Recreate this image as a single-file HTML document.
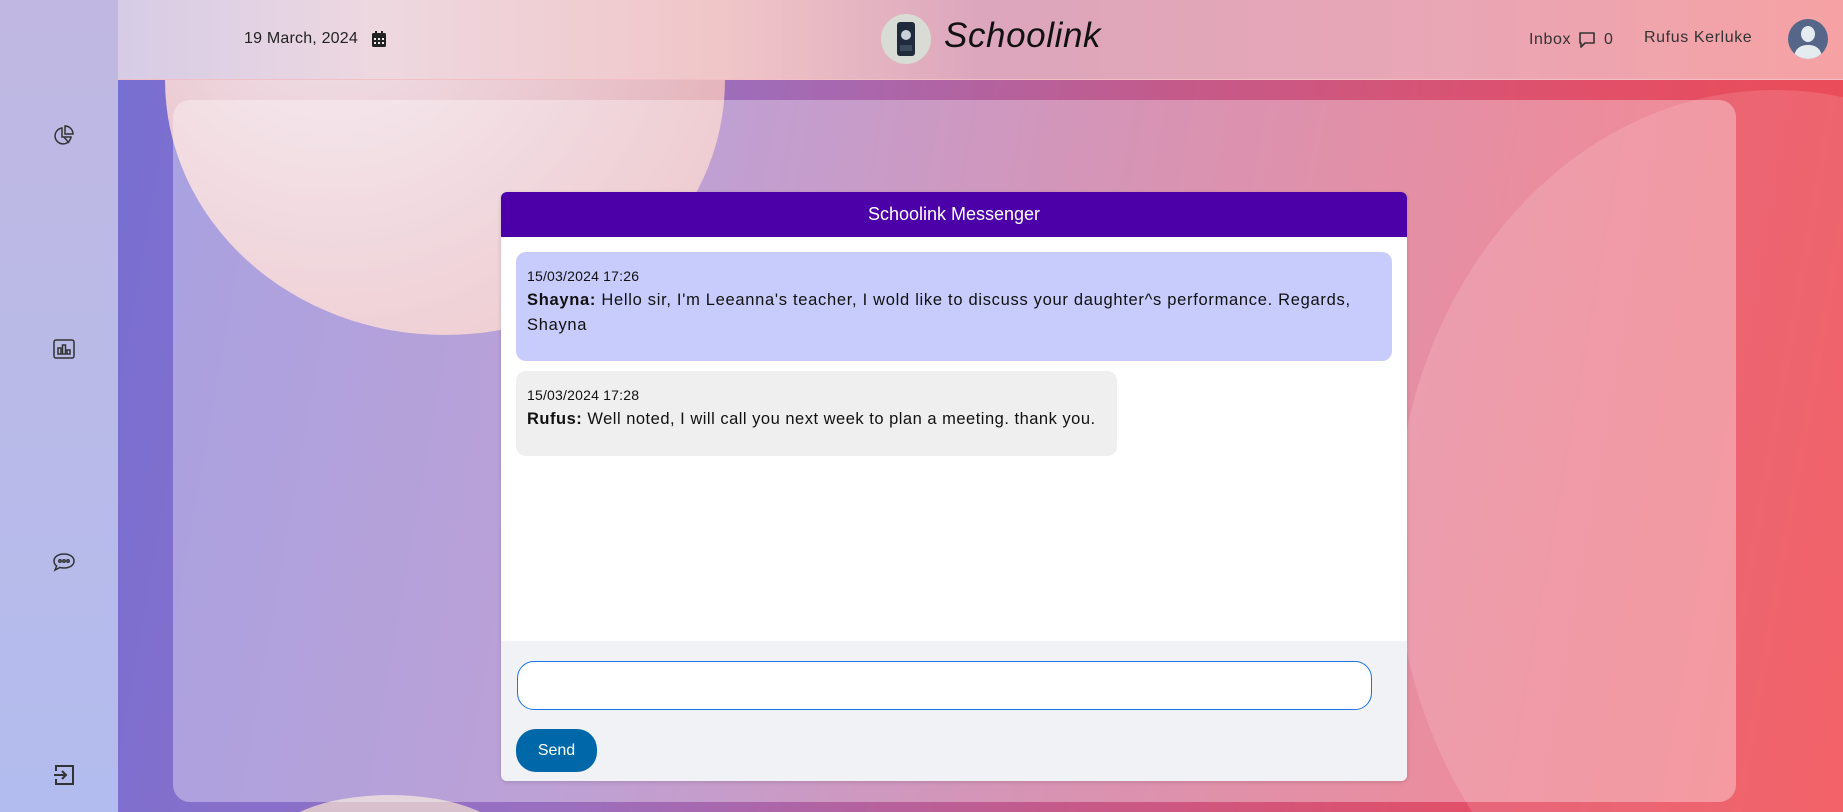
<!DOCTYPE html>
<html style="width:1843px;height:812px;overflow:hidden"><head><meta charset="utf-8"><style>
*{box-sizing:border-box;margin:0;padding:0}
html,body{width:1843px;height:812px;overflow:hidden}
body{position:relative;font-family:"Liberation Sans",sans-serif;}
#w{position:absolute;left:0;top:0;width:1843px;height:812px;overflow:hidden;
background:linear-gradient(100deg,#6f6fd6 0%,#9a6fc0 35%,#c45a8a 60%,#e0506a 80%,#f04a50 100%);}
.blob{position:absolute;border-radius:50%}
.side{position:absolute;left:0;top:0;width:118px;height:812px;background:linear-gradient(180deg,#c0b8e2,#b2bcee);}
.head{position:absolute;left:118px;top:0;width:1725px;height:80px;background:linear-gradient(90deg,#d6cce6 0%,#eed8e0 15%,#f0c6c8 35%,#dca6bc 50%,#e8a6b6 75%,#f6a2a4 100%);border-bottom:1px solid #f2c0c4}
.panel{position:absolute;left:173px;top:100px;width:1563px;height:702px;border-radius:17px;background:rgba(255,255,255,0.35)}
.ico{position:absolute;left:52px;width:24px;height:24px}
.msgr{position:absolute;left:501px;top:192px;width:906px;height:589px;background:#fff;border-radius:6px;overflow:hidden;box-shadow:0 1px 4px rgba(0,0,0,.15)}
.mh{height:45px;background:#4b00a8;color:#fff;font-size:18px;text-align:center;line-height:45px}
.b{position:absolute;left:15px;border-radius:10px;padding:14px 11px;font-size:16.5px;letter-spacing:0.7px;line-height:25px;color:#111}
.b .d{font-size:14px;letter-spacing:0.2px;line-height:20px;margin-bottom:2px}
.foot{position:absolute;left:0;top:449px;width:906px;height:140px;background:#f0f2f5}
.ht{position:absolute;font-size:16px;color:#333;letter-spacing:0.6px}
</style></head><body><div id="w">
<div class="blob" style="left:165px;top:-175px;width:560px;height:510px;background:radial-gradient(circle at 30% 30%,#f2e6ee,#e6b8c0 70%,#e4a8b0);"></div>
<div class="blob" style="left:1395px;top:90px;width:760px;height:900px;background:rgba(255,210,210,0.18)"></div>
<div class="blob" style="left:270px;top:795px;width:240px;height:100px;background:#d8c0cc"></div>
<div class="panel"></div>
<div class="side"></div>
<div class="head"></div>
<div class="ht" style="left:244px;top:30px;color:#222;letter-spacing:0.2px">19 March, 2024</div>
<svg style="position:absolute;left:372px;top:31px" width="14" height="16" viewBox="0 0 14 16"><rect x="0" y="2" width="14" height="14" rx="1.5" fill="#222"/><rect x="3" y="0" width="2" height="4" fill="#222"/><rect x="9" y="0" width="2" height="4" fill="#222"/><g fill="#eee"><rect x="2" y="7" width="2" height="2"/><rect x="6" y="7" width="2" height="2"/><rect x="10" y="7" width="2" height="2"/><rect x="2" y="11" width="2" height="2"/><rect x="6" y="11" width="2" height="2"/><rect x="10" y="11" width="2" height="2"/></g></svg>
<div style="position:absolute;left:881px;top:14px;width:50px;height:50px;border-radius:50%;background:#d8dcd4"></div>
<svg style="position:absolute;left:896px;top:21px" width="20" height="36" viewBox="0 0 20 36"><rect x="1" y="1" width="18" height="34" rx="3" fill="#1f2a3a"/><circle cx="10" cy="14" r="5" fill="#c8d0d8"/><rect x="4" y="24" width="12" height="6" fill="#3a4a5a"/></svg>
<div style="position:absolute;left:944px;top:16px;font-size:35px;font-style:italic;color:#111;letter-spacing:0.6px">Schoolink</div>
<div class="ht" style="left:1529px;top:31px">Inbox</div>
<svg style="position:absolute;left:1578px;top:31px" width="18" height="18" viewBox="0 0 18 18"><path d="M2 2h14v10H7l-4 4v-4H2z" fill="none" stroke="#333" stroke-width="1.6" stroke-linejoin="round"/></svg>
<div class="ht" style="left:1604px;top:31px">0</div>
<div class="ht" style="left:1644px;top:29px">Rufus Kerluke</div>
<svg style="position:absolute;left:1788px;top:19px" width="40" height="40" viewBox="0 0 40 40"><circle cx="20" cy="20" r="20" fill="#556688"/><clipPath id="c"><circle cx="20" cy="20" r="20"/></clipPath><g clip-path="url(#c)" fill="#e4ecf0"><ellipse cx="20" cy="15" rx="7" ry="8"/><path d="M6 40c0-10 6-14 14-14s14 4 14 14z"/></g></svg>
<svg class="ico" style="top:124px" viewBox="0 0 24 24" fill="none" stroke="#333" stroke-width="1.5"><path d="M10 4a8 8 0 1 0 9 9h-9z"/><path d="M13 2v8h8a8 8 0 0 0-8-8z"/><path d="M12 13l5 6"/></svg>
<svg class="ico" style="top:337px" viewBox="0 0 24 24" fill="none" stroke="#333" stroke-width="1.5"><rect x="2" y="3" width="20" height="18" rx="2"/><rect x="6" y="11" width="3" height="6"/><rect x="10.5" y="8" width="3" height="9"/><rect x="15" y="13" width="3" height="4"/></svg>
<svg class="ico" style="top:550px" viewBox="0 0 24 24" fill="none" stroke="#333" stroke-width="1.5"><path d="M12 4c6 0 10 3 10 7s-4 7-10 7c-1.5 0-3-.2-4-.6L3 20l1.6-4C3 14.8 2 13 2 11c0-4 4-7 10-7z"/><circle cx="8" cy="11" r="1.2"/><circle cx="12" cy="11" r="1.2"/><circle cx="16" cy="11" r="1.2"/></svg>
<svg class="ico" style="top:763px" viewBox="0 0 24 24" fill="none" stroke="#333" stroke-width="2"><path d="M4 8V3h17v18H4v-5"/><path d="M2 12h12M10 8l4 4-4 4"/></svg>
<div class="msgr">
<div class="mh">Schoolink Messenger</div>
<div class="b" style="top:60px;width:876px;height:109px;background:#c8ccfc"><div class="d">15/03/2024 17:26</div><b>Shayna:</b> Hello sir, I'm Leeanna's teacher, I wold like to discuss your daughter^s performance. Regards, Shayna</div>
<div class="b" style="top:179px;width:601px;height:85px;background:#efefef;white-space:nowrap;letter-spacing:0.5px"><div class="d">15/03/2024 17:28</div><b>Rufus:</b> Well noted, I will call you next week to plan a meeting. thank you.</div>
<div class="foot">
<div style="position:absolute;left:16px;top:20px;width:855px;height:49px;border:1.5px solid #1a73e8;border-radius:17px;background:#fff"></div>
<div style="position:absolute;left:15px;top:88px;width:81px;height:43px;border-radius:20px;background:#0068a8;color:#fff;font-size:16px;text-align:center;line-height:43px">Send</div>
</div>
</div>
</div></body></html>
